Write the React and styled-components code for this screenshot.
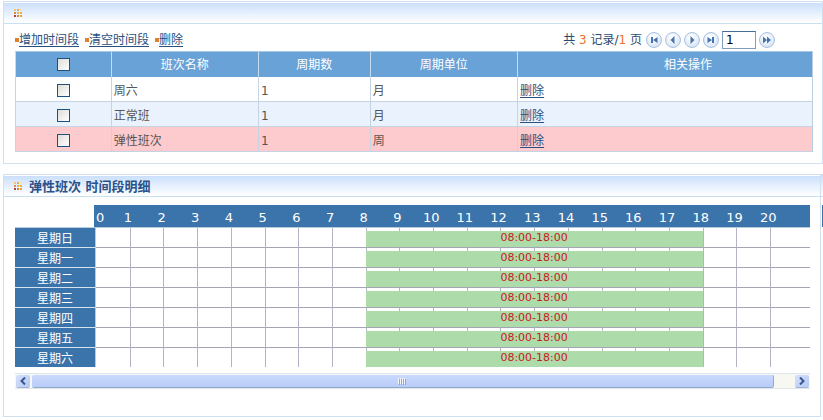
import React from "react";
import styled, { createGlobalStyle } from "styled-components";

const GlobalStyle = createGlobalStyle`
  *, *::before, *::after { box-sizing: border-box; }
  body {
    margin: 0;
    background: #fff;
    color: #555;
    font: 12px/16px "DejaVu Sans", "Noto Sans CJK SC", sans-serif;
  }
  button, input { font: inherit; margin: 0; }
`;

const Page = styled.main`
  display: flex;
  flex-direction: column;
  gap: 10px;
  padding: 1px 0 2px 3px;
`;

const PanelRow = styled.div`
  display: flex;
`;

const Panel = styled.section`
  flex: 1;
  min-width: 0;
  border: 1px solid #cfe0f1;
`;

const PanelHeader = styled.header`
  display: flex;
  align-items: center;
  gap: 7px;
  height: 22px;
  padding-left: 10px;
  border-bottom: 1px solid #c9e0ef;
  border-top: 1px solid #fff;
  background: linear-gradient(#cbdffb, #f8fbff 85%, #fff);
`;

const PanelTitle = styled.h2`
  margin: 0;
  padding-top: 2px;
  font-size: 13px;
  line-height: 16px;
  font-weight: 700;
  color: #2b5288;
`;

const PanelBody = styled.div`
  padding: ${(p) => p.$padding};
`;

const Toolbar = styled.div`
  display: flex;
  align-items: center;
  justify-content: space-between;
  height: 27px;
  padding: 5px 38px 0 0;
`;

const Actions = styled.nav`
  display: flex;
  gap: 6px;
`;

const Action = styled.span`
  display: flex;
  align-items: center;

  &::before {
    content: "";
    width: 4px;
    height: 4px;
    background: #e07f2c;
  }
`;

const TextLink = styled.a`
  color: #294f80;
  text-decoration: underline;
  text-underline-offset: 2px;
`;

const Pager = styled.div`
  display: flex;
  align-items: center;
  gap: 3px;
  color: #2b4a70;
`;

const PagerText = styled.span`
  margin-right: 1px;
`;

const Count = styled.span`
  color: #f0702a;
`;

const RoundButton = styled.button`
  display: flex;
  width: 16px;
  height: 16px;
  padding: 0;
  border: 1px solid #a9c0df;
  border-radius: 50%;
  background: radial-gradient(circle at 45% 35%, #fff 10%, #c9dcf4);
  align-items: center;
  justify-content: center;
`;

const PageInput = styled.input`
  width: 34px;
  height: 18px;
  padding: 0 3px;
  border: 1px solid #7f9db9;
  border-top-color: #456f98;
  color: #000;
  background: #fff;
`;

const ShiftTable = styled.table`
  width: 100%;
  table-layout: fixed;
  border-spacing: 0;
  border-right: 1px solid #b9d0e4;
`;

const Column = styled.col`
  width: ${(p) => p.$width};
`;

const HeadCell = styled.th`
  height: 26px;
  padding: 0;
  border-left: 1px solid #c5dcf0;
  border-top: 1px solid #a5c8e6;
  background: #68a2d7;
  color: #fff;
  font-weight: 400;

  &:last-child {
    padding-left: 46px;
  }
`;

const ShiftRow = styled.tr`
  background: ${(p) => p.$tone};
`;

const Cell = styled.td`
  height: 25px;
  padding: 3px 2px 0;
  border-left: 1px solid #c5d3e2;
  border-bottom: 1px solid #c5d3e2;
`;

const CheckBox = styled.input`
  appearance: none;
  display: block;
  width: 13px;
  height: 13px;
  margin: 0 auto;
  border: 1px solid #1c5180;
  background: linear-gradient(135deg, #dcdcd7, #fff);
`;

const Schedule = styled.table`
  display: block;
`;

const ScheduleGroup = styled.tbody`
  display: block;
`;

const HourGroup = styled.thead`
  display: block;
`;

const HourRow = styled.tr`
  display: grid;
  grid-template-columns: 79px 17px repeat(20, minmax(0, 1fr)) 25px;
  height: 23px;
  line-height: 26px;
  background: linear-gradient(#3a74aa, #3a74aa) 79px 0 no-repeat;
  border-bottom: 1px solid #b7cbe0;
`;

const Hour = styled.th`
  padding: 0;
  color: #fff;
  font-size: 13px;
  font-weight: 400;
  text-align: center;

  &:nth-child(2) {
    padding-left: 2px;
    text-align: left;
  }
`;

const Corner = styled.td`
  padding: 0;
`;

const DayRow = styled.tr`
  display: grid;
  grid-template-columns: 81px repeat(20, minmax(0, 1fr)) 40px;
  height: 20px;

  &:last-child {
    height: 19px;
  }
`;

const Day = styled.th`
  grid-row: 1;
  grid-column: 1;
  padding: 0;
  border-bottom: 1px solid #d5e3ef;
  border-right: 1px solid #b7cbe0;
  background: #3a74aa;
  color: #fff;
  font-weight: 400;
  line-height: 22px;
  text-align: center;
  overflow: hidden;

  ${DayRow}:last-child & {
    border-bottom: 0;
  }
`;

const Slot = styled.td`
  grid-row: 1;
  grid-column: ${(p) => p.$hour + 2};
  padding: 0;
  border-bottom: 1px solid #a4a4b4;
  border-left: ${(p) => (p.$hour === 0 ? "0" : "1px solid #b4b4c6")};

  ${DayRow}:last-child & {
    border-bottom: 0;
  }
`;

const Shift = styled.td`
  grid-row: 1;
  grid-column: ${(p) => p.$from + 2} / ${(p) => p.$to + 2};
  margin: 3px 0 1px;
  padding: 0;
  background: #addbaa;
  color: #c8201c;
  font-size: 11px;
  line-height: 14px;
  text-align: center;

  ${DayRow}:last-child & {
    margin-bottom: 0;
  }
`;

const ScrollBar = styled.div`
  display: flex;
  gap: 2px;
  height: 16px;
  margin-top: 6px;
  padding: 1px;
  border-top: 1px solid #dbe7ee;
  border-bottom: 1px solid #e2e6ea;
  background: #f8f8f3;
`;

const ScrollButton = styled.button`
  display: flex;
  align-items: center;
  justify-content: center;
  width: 14px;
  padding: 0;
  border: 0;
  border-radius: 2px;
  background: linear-gradient(135deg, #d5e1fc, #b5c9f5);
  box-shadow: 0 1px 0 #9fb5d6;
`;

const Track = styled.div`
  flex: 1;
  display: flex;
  padding-right: 19px;
`;

const Thumb = styled.div`
  flex: 1;
  display: flex;
  align-items: center;
  justify-content: center;
  border-radius: 2px;
  border-right: 1px solid #8daad0;
  background: linear-gradient(#cbd9fd, #b9ccf8);
  box-shadow: 0 1px 0 #8fabc9;
`;

const NextPanel = styled.div`
  display: flex;
  flex-direction: column;
  gap: 8px;
  width: 2px;
`;

const NextHeader = styled.div`
  height: 23px;
  border-top: 1px solid #cfe0f1;
  border-bottom: 1px solid #c9e0ef;
  background: linear-gradient(#cbdffb, #fff);
`;

const NextSchedule = styled.div`
  height: 22px;
  margin-left: 1px;
  background: #3a74aa;
`;

const DOTS = [
  ["#f3c26b", 0, 0], ["#e9ab4a", 3, 0], ["#fbe3b4", 6, 0],
  ["#e08a35", 0, 3], ["#efb040", 3, 3], ["#e5b052", 6, 3],
  ["#b8402c", 0, 6], ["#d9812f", 3, 6], ["#e3a23f", 6, 6],
];

function DotsIcon() {
  return (
    <svg width="8" height="8" viewBox="0 0 8 8" aria-hidden="true">
      {DOTS.map(([fill, x, y]) => (
        <rect key={`${x}-${y}`} x={x} y={y} width="2" height="2" fill={fill} />
      ))}
    </svg>
  );
}

const PAGER_SHAPES = {
  首页: "M2 2h2v6H2zM8.500 2v6L4 5z",
  上一页: "M6.500 1v8L2.500 5z",
  下一页: "M3.500 1v8L7.500 5z",
  末页: "M6 2h2v6H6zM1.500 2v6L6 5z",
  跳转: "M1 1.500v7L5 5zM5 1.500v7L9 5z",
};

function PagerButton({ name }) {
  return (
    <RoundButton type="button" aria-label={name}>
      <svg width="10" height="10" viewBox="0 0 10 10">
        <path d={PAGER_SHAPES[name]} fill="#4374ae" />
      </svg>
    </RoundButton>
  );
}

function Chevron({ d }) {
  return (
    <svg width="8" height="8" viewBox="0 0 8 8">
      <path d={d} fill="none" stroke="#38558e" strokeWidth="2" />
    </svg>
  );
}

function Grip() {
  return (
    <svg width="9" height="7" viewBox="0 0 9 7">
      <path d="M.5 0v6M2.500 0v6M4.500 0v6M6.500 0v6" stroke="#f2f6ff" />
      <path d="M1.500 1v6M3.500 1v6M5.500 1v6M7.500 1v6" stroke="#8ea8dd" />
    </svg>
  );
}

const ACTIONS = ["增加时间段", "清空时间段", "删除"];
const WIDTHS = ["12%", "18.5%", "14%", "18.5%", "37%"];
const HEADINGS = ["班次名称", "周期数", "周期单位", "相关操作"];
const SHIFTS = [
  { name: "周六", count: 1, unit: "月", tone: "#fff" },
  { name: "正常班", count: 1, unit: "月", tone: "#eaf2fe" },
  { name: "弹性班次", count: 1, unit: "周", tone: "#fdcbce" },
];
const DAYS = ["星期日", "星期一", "星期二", "星期三", "星期四", "星期五", "星期六"];
const HOURS = Array.from({ length: 21 }, (_, hour) => hour);

export default function App() {
  return (
    <>
      <GlobalStyle />
      <Page>
        <Panel>
          <PanelHeader>
            <DotsIcon />
          </PanelHeader>
          <PanelBody $padding="0 9px 11px 11px">
            <Toolbar>
              <Actions>
                {ACTIONS.map((label) => (
                  <Action key={label}>
                    <TextLink href="#">{label}</TextLink>
                  </Action>
                ))}
              </Actions>
              <Pager>
                <PagerText>
                  共 <Count>3</Count> 记录/<Count>1</Count> 页
                </PagerText>
                <PagerButton name="首页" />
                <PagerButton name="上一页" />
                <PagerButton name="下一页" />
                <PagerButton name="末页" />
                <PageInput aria-label="页码" defaultValue="1" />
                <PagerButton name="跳转" />
              </Pager>
            </Toolbar>
            <ShiftTable>
              <colgroup>
                {WIDTHS.map((width, i) => (
                  <Column key={i} $width={width} />
                ))}
              </colgroup>
              <thead>
                <tr>
                  <HeadCell>
                    <CheckBox type="checkbox" aria-label="全选" />
                  </HeadCell>
                  {HEADINGS.map((heading) => (
                    <HeadCell key={heading}>{heading}</HeadCell>
                  ))}
                </tr>
              </thead>
              <tbody>
                {SHIFTS.map((shift) => (
                  <ShiftRow key={shift.name} $tone={shift.tone}>
                    <Cell>
                      <CheckBox type="checkbox" aria-label={shift.name} />
                    </Cell>
                    <Cell>{shift.name}</Cell>
                    <Cell>{shift.count}</Cell>
                    <Cell>{shift.unit}</Cell>
                    <Cell>
                      <TextLink href="#">删除</TextLink>
                    </Cell>
                  </ShiftRow>
                ))}
              </tbody>
            </ShiftTable>
          </PanelBody>
        </Panel>

        <PanelRow>
          <Panel>
            <PanelHeader>
              <DotsIcon />
              <PanelTitle>弹性班次 时间段明细</PanelTitle>
            </PanelHeader>
            <PanelBody $padding="8px 10px 27px 11px">
              <Schedule>
                <HourGroup>
                  <HourRow>
                    <Corner />
                    {HOURS.map((hour) => (
                      <Hour key={hour} scope="col">{hour}</Hour>
                    ))}
                  </HourRow>
                </HourGroup>
                <ScheduleGroup>
                  {DAYS.map((day) => (
                    <DayRow key={day}>
                      <Day scope="row">{day}</Day>
                      {HOURS.map((hour) => (
                        <Slot key={hour} $hour={hour} />
                      ))}
                      <Shift $from={8} $to={18}>08:00-18:00</Shift>
                    </DayRow>
                  ))}
                </ScheduleGroup>
              </Schedule>
              <ScrollBar>
                <ScrollButton type="button" aria-label="向左滚动">
                  <Chevron d="M6 0.500L2.500 4L6 7.500" />
                </ScrollButton>
                <Track>
                  <Thumb>
                    <Grip />
                  </Thumb>
                </Track>
                <ScrollButton type="button" aria-label="向右滚动">
                  <Chevron d="M2 0.500L5.500 4L2 7.500" />
                </ScrollButton>
              </ScrollBar>
            </PanelBody>
          </Panel>
          <NextPanel>
            <NextHeader />
            <NextSchedule />
          </NextPanel>
        </PanelRow>
      </Page>
    </>
  );
}
